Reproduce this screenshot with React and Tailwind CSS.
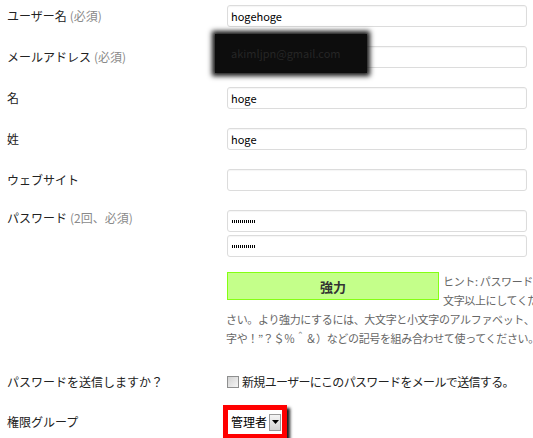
const FONT = "font-['Noto_Sans_CJK_JP','Noto_Sans',sans-serif]";

const Field = ({ value, children }) => (
  <div className="relative flex h-[22px] w-[300px] items-center rounded-[3px] border border-[#dcdcdc] bg-white pl-[3px] text-[11px] text-black shadow-[inset_0_1px_1px_rgba(0,0,0,0.04)]">
    {value}
    {children}
  </div>
);

const Label = ({ text, note }) => (
  <div className="flex h-[22px] w-[220px] items-center text-[12px] text-[#222]">
    {text}
    {note && <span className="ml-[3px] text-[#8a8a8a]">{note}</span>}
  </div>
);

const Row = ({ label, note, value, className = 'mb-[19px]', children }) => (
  <div className={`flex items-start ${className}`}>
    <Label text={label} note={note} />
    {children || <Field value={value} />}
  </div>
);

// masked password: tiny ticks like the old bitmap bullets
const Dots = () => (
  <div className="ml-[1px] flex items-center gap-[1px]">
    {Array.from({ length: 12 }).map((_, i) => (
      <span key={i} className="h-[3px] w-[1px] bg-black" />
    ))}
  </div>
);

export default function App() {
  return (
    <div className={`relative h-[438px] w-[533px] overflow-hidden bg-white ${FONT}`}>
      <div className="pl-[7px] pt-[5px]">
        <Row label="ユーザー名" note="(必須)" value="hogehoge" />
        <Row label="メールアドレス" note="(必須)">
          <Field>
            <div className="absolute left-[-13px] top-[-13px] flex h-[39px] w-[152px] items-center bg-[#0d0d0d] pl-[16px] text-[11px] text-[#262626] shadow-[0_0_5px_3px_#141414]">
              akimljpn@gmail.com
            </div>
          </Field>
        </Row>
        <Row label="名" value="hoge" />
        <Row label="姓" value="hoge" />
        <Row label="ウェブサイト" value="" />

        <div className="flex items-start">
          <div className="-mt-[3px]">
            <Label text="パスワード" note="(2回、必須)" />
          </div>
          <div className="flex flex-col">
            <Field>
              <Dots />
            </Field>
            <div className="mt-[3px]">
              <Field>
                <Dots />
              </Field>
            </div>
            <div className="mt-[15px] text-[11px] leading-[19px] tracking-[-0.35px] text-[#666]">
              <div className="flex">
                <div className="flex h-[28px] w-[212px] items-center justify-center border border-[#85ff14] bg-[#c4ff8a] text-[13px] font-bold tracking-normal text-[#333]">
                  強力
                </div>
                <div className="ml-[4px] whitespace-nowrap">
                  ヒント: パスワードは最低7
                  <br />
                  文字以上にしてください。
                </div>
              </div>
              <div className="-ml-[1px] whitespace-nowrap">
                さい。より強力にするには、大文字と小文字のアルファベット、数
                <br />
                字や！”？＄％＾＆）などの記号を組み合わせて使ってください。
              </div>
            </div>
          </div>
        </div>

        <div className="mt-[23px] flex items-start">
          <Label text="パスワードを送信しますか？" />
          <div className="flex h-[22px] items-center text-[12px] tracking-[-0.65px] text-[#222]">
            <span className="mr-[3px] h-[12px] w-[12px] border border-[#8e8f8f] bg-gradient-to-br from-[#d2d2d2] to-[#f6f6f6]" />
            新規ユーザーにこのパスワードをメールで送信する。
          </div>
        </div>

        <div className="mt-[12px] flex items-center">
          <Label text="権限グループ" />
          <div className="-ml-[4px] border-[5px] border-[#ff0000] shadow-[3px_3px_3px_rgba(0,0,0,0.9)]">
            <div className="flex h-[24px] items-center bg-white pl-[3px] pr-[1px] text-[12px] text-black">
              管理者
              <span className="ml-[2px] flex h-[17px] w-[12px] items-center justify-center border border-[#9a9a9a] bg-gradient-to-b from-[#f4f4f4] to-[#d4d4d4]">
                <svg width="7" height="4" viewBox="0 0 7 4">
                  <path d="M0 0h7L3.5 4z" fill="#000" />
                </svg>
              </span>
            </div>
          </div>
        </div>
      </div>
    </div>
  );
}
